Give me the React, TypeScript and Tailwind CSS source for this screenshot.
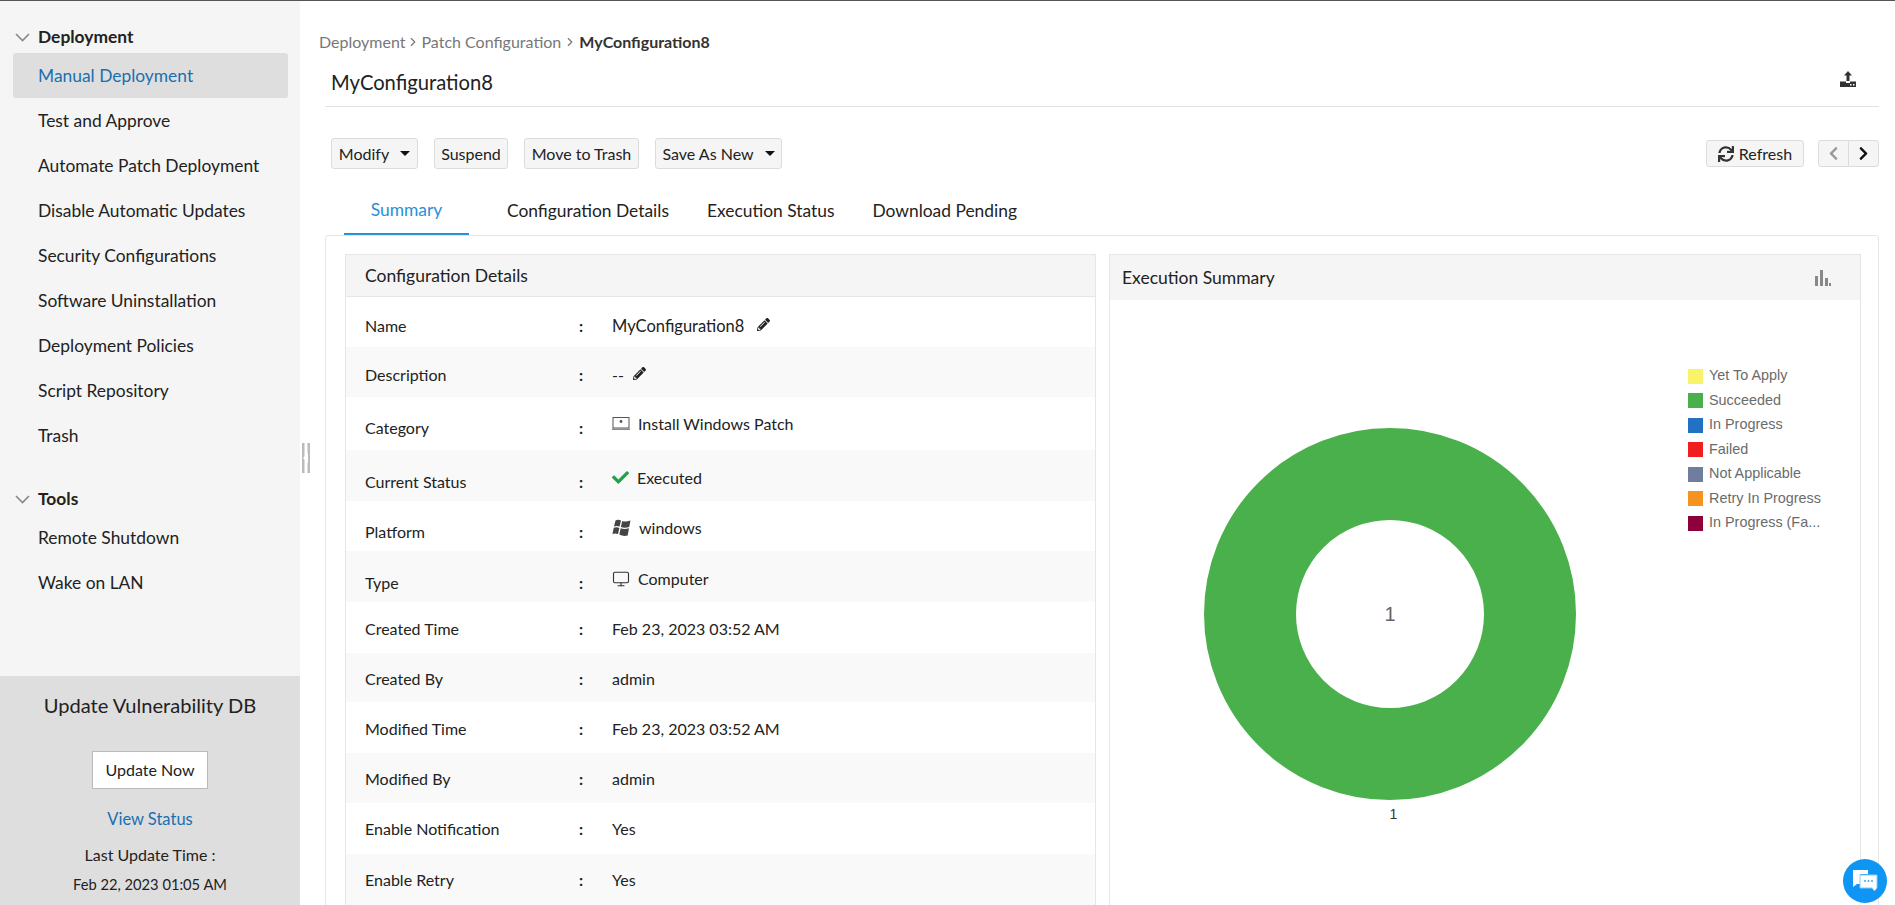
import { ChevronRight, Monitor } from 'lucide-react'
import { FaPencilAlt, FaCheck, FaSync, FaChevronLeft, FaChevronRight } from 'react-icons/fa'

const deploymentItems = [
  'Manual Deployment',
  'Test and Approve',
  'Automate Patch Deployment',
  'Disable Automatic Updates',
  'Security Configurations',
  'Software Uninstallation',
  'Deployment Policies',
  'Script Repository',
  'Trash',
]

const legend = [
  { label: 'Yet To Apply', color: 'bg-[#f9f36a]' },
  { label: 'Succeeded', color: 'bg-[#4ab04c]' },
  { label: 'In Progress', color: 'bg-[#2271c3]' },
  { label: 'Failed', color: 'bg-[#f01f1f]' },
  { label: 'Not Applicable', color: 'bg-[#717d9f]' },
  { label: 'Retry In Progress', color: 'bg-[#f6921e]' },
  { label: 'In Progress (Fa...', color: 'bg-[#8c003c]' },
]

function ActionButton({ label, width, caret }: { label: string; width: string; caret?: boolean }) {
  return (
    <button className={`flex h-[31px] items-center justify-center rounded-[3px] border border-[#dcdcdc] bg-[#f5f5f5] text-[16px] text-[#222] ${width}`}>
      {label}
      {caret && <span className="ml-[11px] inline-block h-0 w-0 border-x-[5px] border-t-[5px] border-x-transparent border-t-[#111]" />}
    </button>
  )
}

function Row({ label, className, icon, children }: { label: string; className: string; icon?: boolean; children: React.ReactNode }) {
  return (
    <div className={`flex items-center text-[16px] text-[#222] ${className}`}>
      <div className="w-[233px] shrink-0 pl-[19px]">{label}</div>
      <div className="w-[33px] shrink-0 font-bold">:</div>
      <div className={`flex items-center ${icon ? '-translate-y-[4px]' : ''}`}>{children}</div>
    </div>
  )
}

function SectionHeader({ label, className }: { label: string; className: string }) {
  return (
    <div className={`flex h-[34px] items-center pl-[15px] text-[17.4px] font-bold text-[#222] ${className}`}>
      <svg width="15" height="9" viewBox="0 0 15 9" className="mr-[8px] text-[#888]">
        <path d="M1 1l6.5 6.5L14 1" fill="none" stroke="currentColor" strokeWidth="1.6" />
      </svg>
      {label}
    </div>
  )
}

function LaptopIcon() {
  return (
    <svg width="18" height="14" viewBox="0 0 18 14" className="mr-[8px] text-[#555]">
      <rect x="1" y="0.5" width="16" height="10.5" fill="none" stroke="currentColor" />
      <path d="M0 11.5h18v1.500H0z" fill="#888" />
      <circle cx="9" cy="4.500" r="1.400" fill="currentColor" />
    </svg>
  )
}

function WindowsFlag() {
  return (
    <svg width="19" height="18" viewBox="0 0 19 18" className="mr-[8px] text-[#444]">
      <path d="M3.5 1.5Q6 0 9 1.5L7.6 7.6Q4.8 6.4 2 7.6z" fill="currentColor" />
      <path d="M10.2 2Q13.5 3.4 18.5 1.6L17.2 8Q12.6 9.4 8.9 8z" fill="currentColor" />
      <path d="M1.8 8.8Q4.6 7.8 7.4 8.9L6 15Q3.2 13.8 0.4 15z" fill="currentColor" />
      <path d="M8.7 9.3Q12.4 10.6 17 9.2L15.7 16.6Q11 17.6 7.3 15.6z" fill="currentColor" />
    </svg>
  )
}

export default function App() {
  return (
    <div className="flex h-[905px] w-[1895px] flex-col overflow-hidden bg-white font-['Lato',sans-serif]">
      <div className="h-[1px] shrink-0 bg-[#555]" />
      <div className="flex min-h-0 flex-1">
        {/* sidebar */}
        <aside className="flex w-[300px] shrink-0 flex-col justify-between bg-[#f5f5f5]">
          <div className="pt-[19px]">
            <SectionHeader label="Deployment" className="-mb-[1px]" />
            <ul>
              {deploymentItems.map((item, idx) => (
                <li
                  key={item}
                  className={`ml-[13px] mr-[12px] flex h-[45px] items-center rounded-[3px] pl-[25px] pt-[2px] text-[17.4px] ${
                    idx === 0 ? 'bg-[#dedede] text-[#1a6fb0]' : 'text-[#222]'
                  }`}
                >
                  {item}
                </li>
              ))}
            </ul>
            <SectionHeader label="Tools" className="mt-[24px]" />
            <ul>
              {['Remote Shutdown', 'Wake on LAN'].map(item => (
                <li key={item} className="ml-[13px] flex h-[45px] items-center pl-[25px] text-[17.4px] text-[#222]">
                  {item}
                </li>
              ))}
            </ul>
          </div>
          <div className="flex h-[229px] flex-col items-center bg-[#dedede] pt-[14px] text-[#222]">
            <div className="text-[20.1px] leading-[30px]">Update Vulnerability DB</div>
            <button className="mt-[31px] h-[38px] w-[116px] border border-[#bbb] bg-white text-[16px]">Update Now</button>
            <div className="mt-[18px] text-[16.5px] text-[#1a6fb0]">View Status</div>
            <div className="mt-[11px] text-[16px]">Last Update Time :</div>
            <div className="mt-[6px] text-[14.7px]">Feb 22, 2023 01:05 AM</div>
          </div>
        </aside>

        {/* main */}
        <main className="relative min-w-0 flex-1 pl-[19px] pr-[16px]">
          <svg width="8" height="30" viewBox="0 0 8 30" className="absolute left-[2px] top-[442px]">
            <path d="M0 0h2.5v30H0z M5.5 0H8v30H5.5z" fill="#bbb" />
            <path d="M6 10v10L1 15z" fill="#fff" />
          </svg>
          <div className="mt-[29px] flex h-[24px] items-center text-[16px] text-[#777]">
            Deployment
            <ChevronRight size={14} className="mx-[1px]" />
            Patch Configuration
            <ChevronRight size={14} className="mx-[2px]" />
            <span className="font-bold text-[#333]">MyConfiguration8</span>
          </div>
          <div className="ml-[6px] flex h-[53px] items-center justify-between border-b border-[#e2e2e2] pl-[6px] pr-[22px] pt-[5px]">
            <div className="text-[20.2px] text-[#222]">MyConfiguration8</div>
            <svg width="18" height="17" viewBox="0 0 18 17" className="-translate-y-[3px] text-[#333]">
              <path d="M9 0l4 4.500h-2.500V10h-3V4.500H5z M1 10.500h6v1.500h4v-1.500h6V16H1z" fill="currentColor" />
              <path d="M11 13h1.500v1.500H11z M14 13h1.500v1.500H14z" fill="#fff" />
            </svg>
          </div>

          <div className="ml-[12px] mt-[31px] flex items-center justify-between">
            <div className="flex items-center gap-[16px]">
              <ActionButton label="Modify" width="w-[87px]" caret />
              <ActionButton label="Suspend" width="w-[74px]" />
              <ActionButton label="Move to Trash" width="w-[115px]" />
              <ActionButton label="Save As New" width="w-[127px]" caret />
            </div>
            <div className="flex items-center gap-[14px]">
              <button className="flex h-[27px] w-[98px] items-center justify-center rounded-[3px] border border-[#dcdcdc] bg-[#f5f5f5] text-[16px] text-[#222]">
                <FaSync size={16} className="mr-[5px] text-[#333]" />
                Refresh
              </button>
              <div className="flex h-[27px] w-[61px] rounded-[3px] border border-[#dcdcdc] bg-[#f5f5f5]">
                <span className="flex w-[30px] items-center justify-center border-r border-[#dcdcdc] text-[#999]">
                  <FaChevronLeft size={15} />
                </span>
                <span className="flex flex-1 items-center justify-center text-[#111]">
                  <FaChevronRight size={15} />
                </span>
              </div>
            </div>
          </div>

          <div className="ml-[25px] mt-[19px] flex h-[47px] text-[17.4px] text-[#222]">
            <div className="flex w-[125px] items-center justify-center border-b-2 border-[#2b8fd9] text-[#2b8fd9]">Summary</div>
            <div className="flex items-center pl-[38px]">Configuration Details</div>
            <div className="flex items-center pl-[38px]">Execution Status</div>
            <div className="flex items-center pl-[38px]">Download Pending</div>
          </div>

          <div className="ml-[6px] flex h-[700px] gap-[13px] rounded-[3px] border border-[#e6e6e6] px-[19px] pt-[18px]">
            {/* details card */}
            <section className="w-[751px] shrink-0 border border-[#e6e6e6]">
              <div className="flex h-[42px] items-center border-b border-[#e6e6e6] bg-[#f5f5f5] pl-[19px] pt-[1px] text-[17.5px] text-[#222]">
                Configuration Details
              </div>
              <Row label="Name" className="h-[50px] bg-white pt-[8px]">
                <span className="text-[16.5px]">MyConfiguration8</span>
                <FaPencilAlt size={13} className="ml-[13px] -translate-y-[2px] text-[#222]" />
              </Row>
              <Row label="Description" className="h-[50px] bg-[#f9f9f9] pt-[6px]">
                --
                <FaPencilAlt size={13} className="ml-[9px] -translate-y-[2px] text-[#222]" />
              </Row>
              <Row label="Category" className="h-[53px] bg-white pt-[8px]" icon>
                <LaptopIcon />
                Install Windows Patch
              </Row>
              <Row label="Current Status" className="h-[51px] bg-[#f9f9f9] pt-[12px]" icon>
                <FaCheck size={17} className="mr-[8px] text-[#1ea34a]" />
                Executed
              </Row>
              <Row label="Platform" className="h-[50px] bg-white pt-[12px]" icon>
                <WindowsFlag />
                windows
              </Row>
              <Row label="Type" className="h-[51px] bg-[#f9f9f9] pt-[12px]" icon>
                <Monitor size={18} strokeWidth={1.5} className="mr-[8px] text-[#333]" />
                Computer
              </Row>
              <Row label="Created Time" className="h-[51px] bg-white pt-[3px]">Feb 23, 2023 03:52 AM</Row>
              <Row label="Created By" className="h-[49px] bg-[#f9f9f9] pt-[3px]">admin</Row>
              <Row label="Modified Time" className="h-[51px] bg-white pt-[3px]">Feb 23, 2023 03:52 AM</Row>
              <Row label="Modified By" className="h-[50px] bg-[#f9f9f9] pt-[2px]">admin</Row>
              <Row label="Enable Notification" className="h-[51px] bg-white">Yes</Row>
              <Row label="Enable Retry" className="h-[51px] bg-[#f9f9f9]">Yes</Row>
            </section>

            {/* chart card */}
            <section className="w-[752px] shrink-0 border border-[#e6e6e6]">
              <div className="flex h-[45px] items-center justify-between bg-[#f5f5f5] pl-[12px] pr-[29px] pt-[2px] text-[17.5px] text-[#222]">
                Execution Summary
                <svg width="17" height="16" viewBox="0 0 17 16" className="-translate-y-[1px] text-[#888]">
                  <path d="M1 6h3v10H1z M6 0h3v16H6z M11 8h3v8h-3z M15 13h2v3h-2z" fill="currentColor" />
                </svg>
              </div>
              <div className="flex">
                <div className="flex w-[560px] flex-col items-center pt-[128px]">
                  <div className="relative">
                    <svg width="372" height="372" viewBox="0 0 372 372">
                      <circle cx="186" cy="186" r="140" fill="none" stroke="#4ab04c" strokeWidth="92" />
                    </svg>
                    <span className="absolute left-1/2 top-1/2 -translate-x-1/2 -translate-y-1/2 font-['Liberation_Sans',sans-serif] text-[20px] text-[#666]">1</span>
                  </div>
                  <div className="ml-[7px] mt-[4px] font-['Liberation_Sans',sans-serif] text-[14px] text-[#333]">1</div>
                </div>
                <ul className="ml-[18px] pt-[64px] font-['Liberation_Sans',sans-serif] text-[14.4px] text-[#6b6b6b]">
                  {legend.map(item => (
                    <li key={item.label} className="flex h-[24.5px] items-center">
                      <span className={`mr-[6px] h-[15px] w-[15px] ${item.color}`} />
                      {item.label}
                    </li>
                  ))}
                </ul>
              </div>
            </section>
          </div>

          {/* chat bubble */}
          <div className="absolute bottom-[2px] right-[8px] flex h-[44px] w-[44px] items-center justify-center rounded-full bg-[#0f96f5]">
            <svg width="28" height="26" viewBox="0 0 28 26">
              <path d="M2 2h15v4H9v10H6l-4 3z" fill="white" />
              <path d="M9 7h17v13l-2.500 3-2.500-3H9z" fill="white" stroke="#8cc8f5" strokeWidth="1" />
              <circle cx="14" cy="13" r="1" fill="#4aa8ea" />
              <circle cx="17.500" cy="13" r="1" fill="#4aa8ea" />
              <circle cx="21" cy="13" r="1" fill="#4aa8ea" />
            </svg>
          </div>
        </main>
      </div>
    </div>
  )
}
